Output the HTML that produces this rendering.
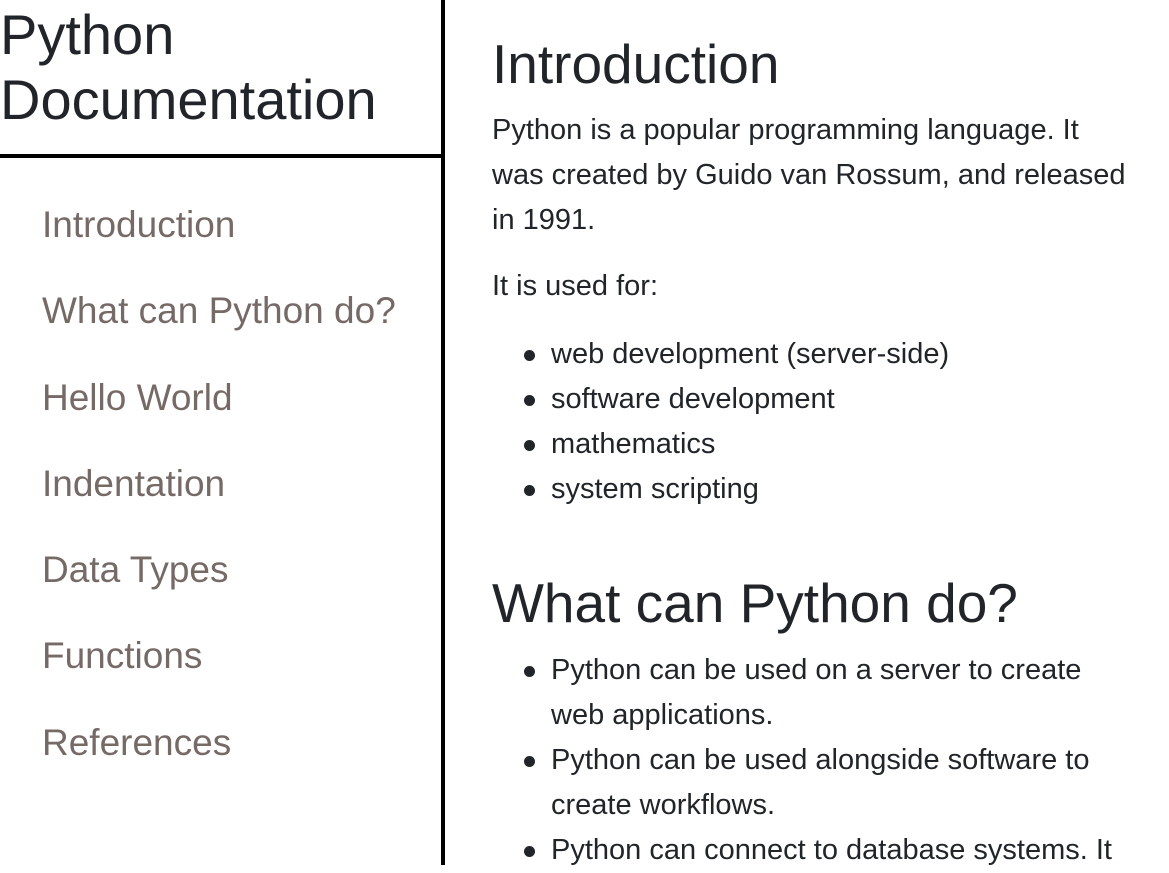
<!DOCTYPE html>
<html><head><meta charset="utf-8"><style>
*{margin:0;padding:0;box-sizing:border-box}
html,body{width:1169px;height:865px;overflow:hidden;background:#fff;font-family:"Liberation Sans",sans-serif;color:#212529}
#nav{position:absolute;left:0;top:0;width:445px;height:865px;border-right:4px solid #000}
#nav header{height:158px;border-bottom:4px solid #000;font-size:56px;line-height:65px;padding-top:2px;color:#212529;white-space:nowrap}
#nav a{position:absolute;left:42px;font-size:37px;color:#766a66;text-decoration:none;white-space:nowrap}
#main{position:absolute;left:492px;top:0;width:670px}
h1{position:absolute;left:0;font-size:55px;font-weight:normal;white-space:nowrap}
p,li{font-size:29px;line-height:45px;white-space:nowrap}
.t{position:absolute;left:0}
ul{position:absolute;left:0;list-style:none}
li{position:relative;padding-left:59px}
li:before{content:"";position:absolute;left:32px;top:18px;width:11px;height:11px;border-radius:50%;background:#212529}
</style></head><body>
<div id="nav">
<header>Python<br>Documentation</header>
<a style="top:204px">Introduction</a>
<a style="top:290px">What can Python do?</a>
<a style="top:377px">Hello World</a>
<a style="top:463px">Indentation</a>
<a style="top:549px">Data Types</a>
<a style="top:635px">Functions</a>
<a style="top:722px">References</a>
</div>
<div id="main">
<h1 style="top:32px">Introduction</h1>
<p class="t" style="top:108px">Python is a popular programming language. It<br>was created by Guido van Rossum, and released<br>in 1991.</p>
<p class="t" style="top:264px">It is used for:</p>
<ul style="top:332px"><li>web development (server-side)</li><li>software development</li><li>mathematics</li><li>system scripting</li></ul>
<h1 style="top:571px">What can Python do?</h1>
<ul style="top:648px"><li>Python can be used on a server to create<br>web applications.</li><li>Python can be used alongside software to<br>create workflows.</li><li>Python can connect to database systems. It</li></ul>
</div>
</body></html>
